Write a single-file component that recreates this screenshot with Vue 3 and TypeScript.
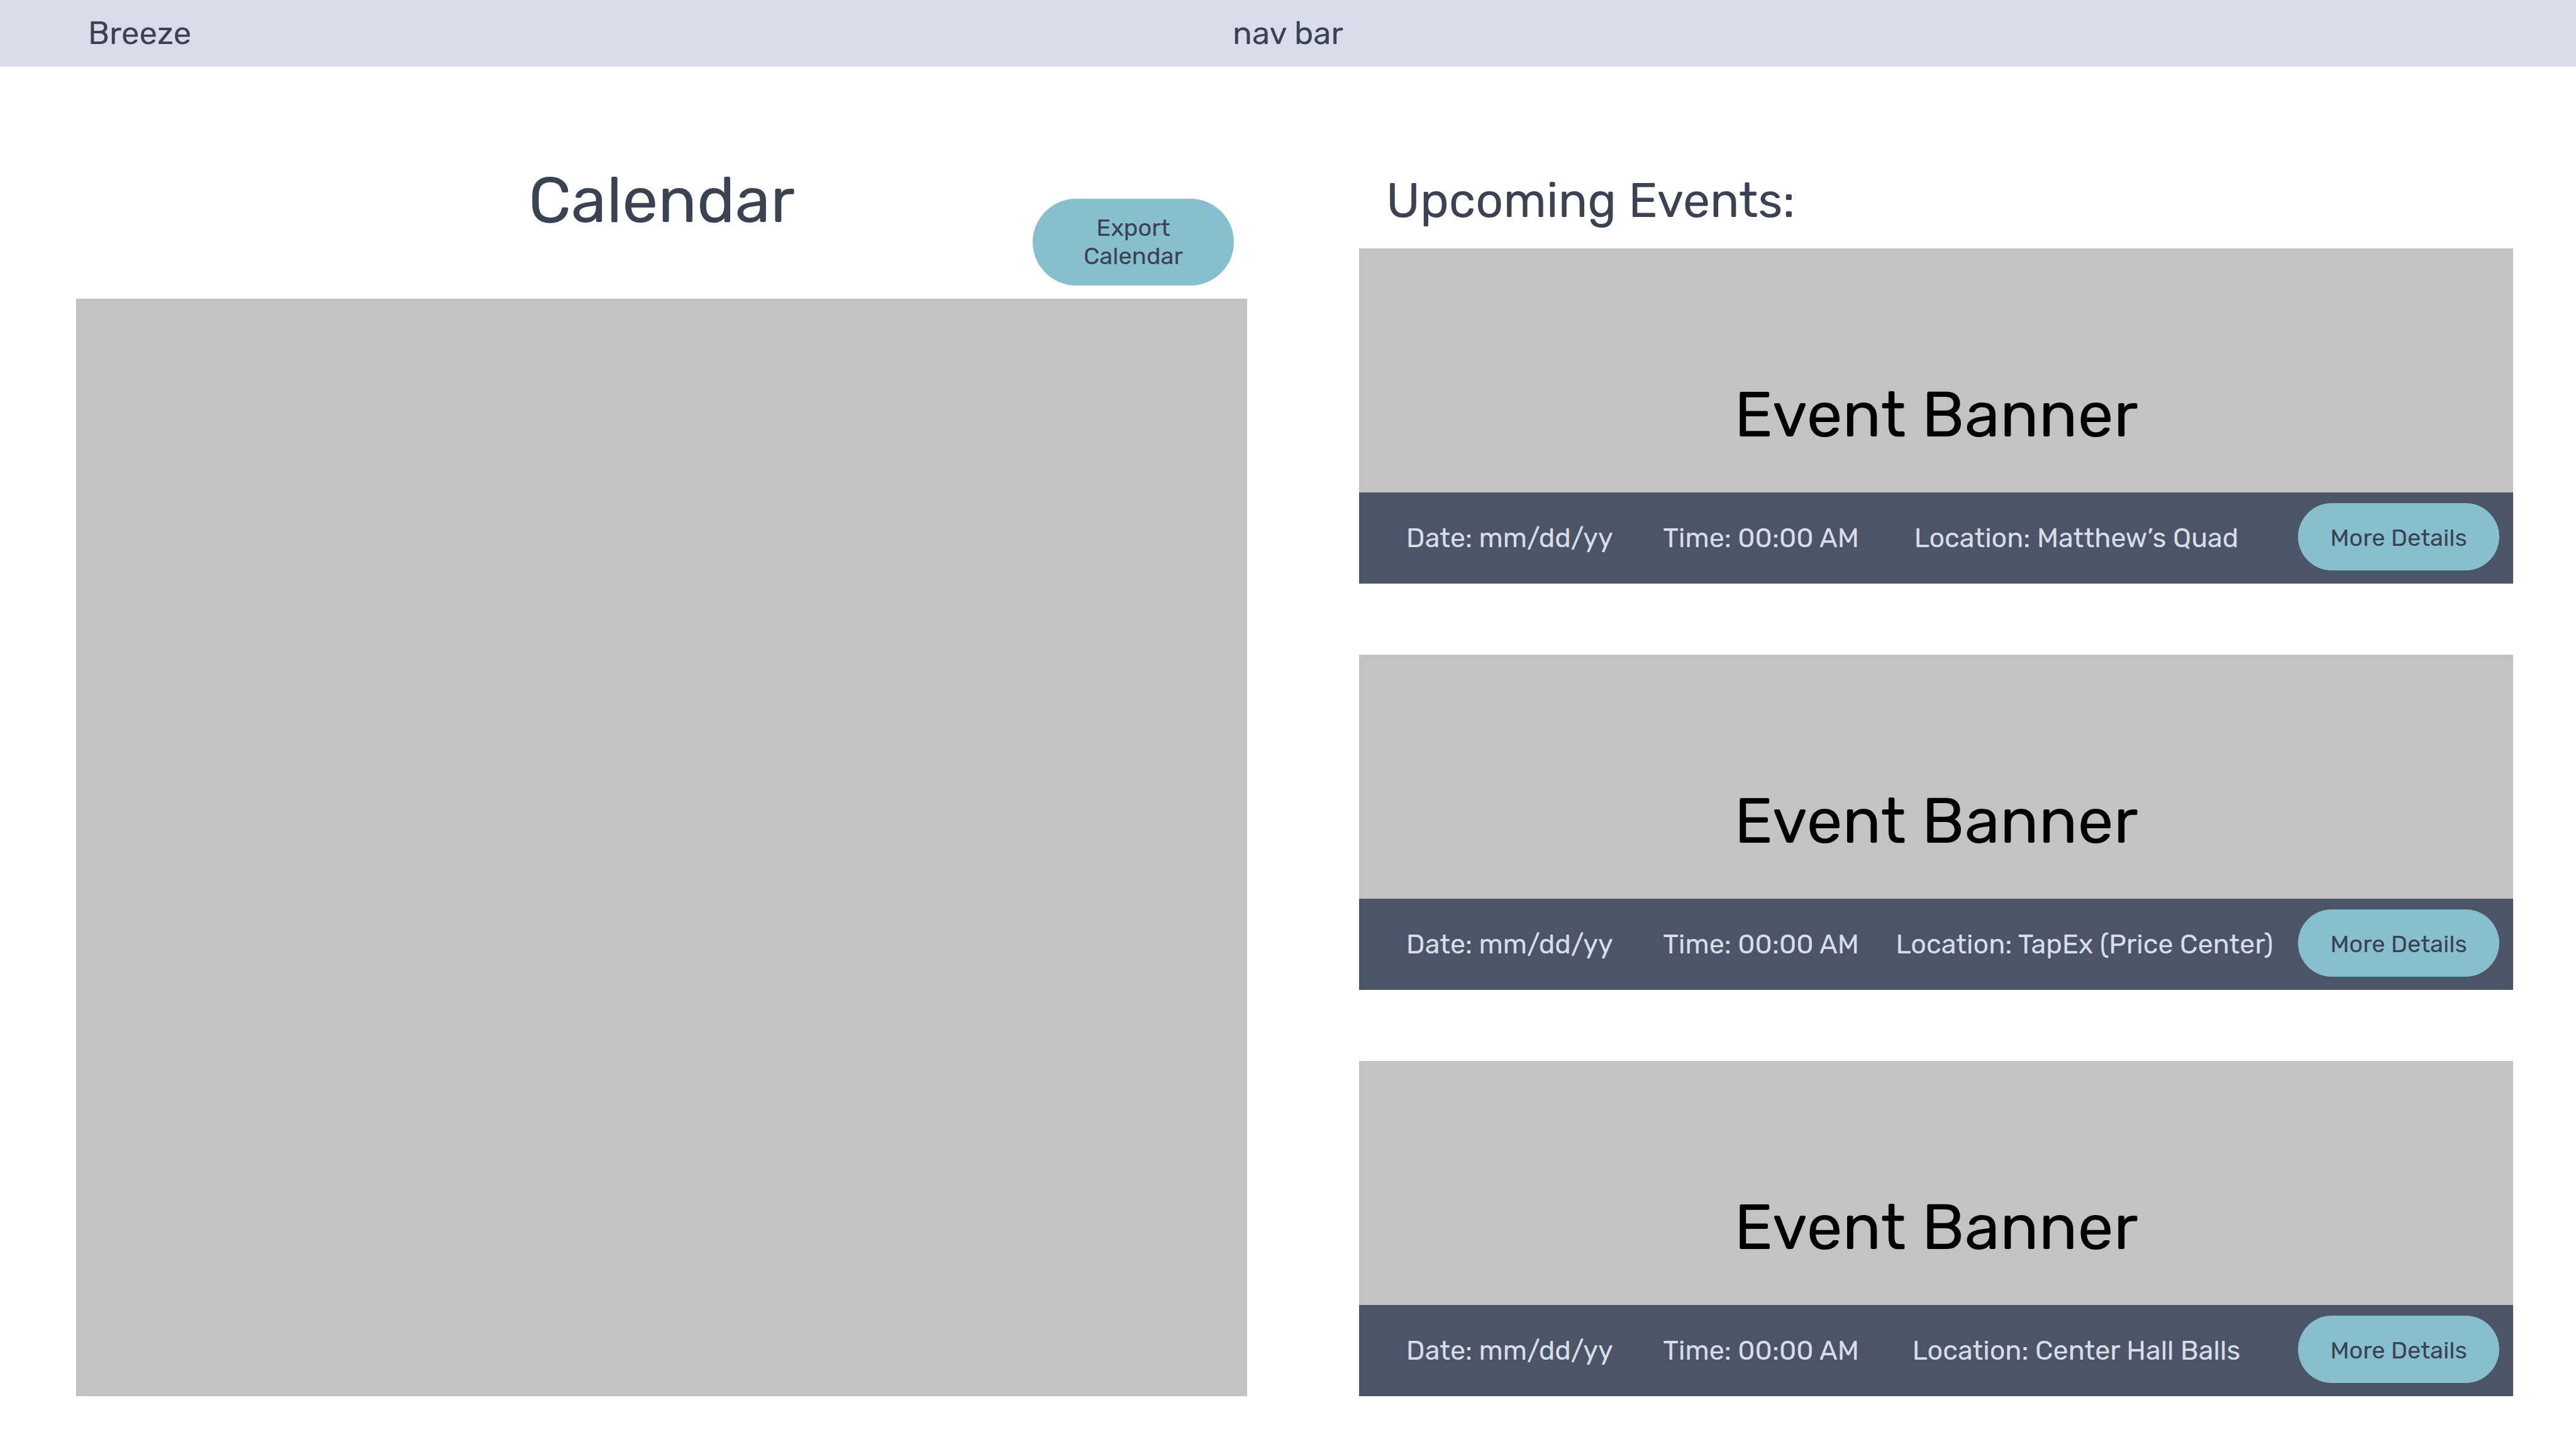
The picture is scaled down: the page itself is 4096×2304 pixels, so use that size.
<script setup lang="ts">
interface CampusEvent {
  id: number
  date: string
  time: string
  location: string
}

const events: CampusEvent[] = [
  { id: 1, date: 'mm/dd/yy', time: '00:00 AM', location: 'Matthew’s Quad' },
  { id: 2, date: 'mm/dd/yy', time: '00:00 AM', location: 'TapEx (Price Center)' },
  { id: 3, date: 'mm/dd/yy', time: '00:00 AM', location: 'Center Hall Balls' },
]
</script>

<template>
  <div class="page">
    <header class="nav">
      <a class="brand" href="#">Breeze</a>
      <nav class="nav-label">nav bar</nav>
    </header>

    <main class="content">
      <section class="column">
        <div class="calendar-head">
          <h1 class="calendar-title">Calendar</h1>
          <button class="pill export" type="button">Export<br />Calendar</button>
        </div>
        <div class="calendar"></div>
      </section>

      <section class="column">
        <div class="events-head">
          <h2 class="events-title">Upcoming Events:</h2>
        </div>
        <div class="events">
          <article v-for="event in events" :key="event.id" class="event">
            <div class="banner">Event Banner</div>
            <div class="details">
              <span>Date: {{ event.date }}</span>
              <span>Time: {{ event.time }}</span>
              <span class="location">Location: {{ event.location }}</span>
              <button class="pill more" type="button">More Details</button>
            </div>
          </article>
        </div>
      </section>
    </main>
  </div>
</template>

<style>
body {
  margin: 0;
  background: #fff;
}
</style>

<style scoped>
.page {
  box-sizing: border-box;
  min-height: 100vh;
  padding-bottom: 84px;
  color: #3b4252;
  font-family: Rubik, Inter, Roboto, sans-serif;
}

.nav {
  display: grid;
  grid-template-columns: 1fr auto 1fr;
  align-items: center;
  height: 106px;
  padding: 0 140px;
  background: #d8dde9;
  font-size: 51px;
  line-height: 60px;
}

.brand {
  color: inherit;
  text-decoration: none;
}

.content {
  display: grid;
  grid-template-columns: 1862fr 1835fr;
  column-gap: 178px;
  padding: 0 100px 0 121px;
}

.column {
  display: flex;
  flex-direction: column;
}

.calendar-head {
  display: grid;
  grid-template-columns: 1fr auto 1fr;
  height: 369px;
}

.calendar-title {
  grid-column: 2;
  margin: 153px 0 0;
  font-size: 102px;
  font-weight: 400;
  line-height: 120px;
}

.calendar {
  flex: 1;
  background: #c3c3c3;
}

.pill {
  width: 320px;
  padding: 0;
  border: 0;
  border-radius: 70px;
  background: #88bfce;
  color: inherit;
  font-family: inherit;
  font-size: 38px;
  line-height: 45px;
  cursor: pointer;
}

.export {
  align-self: end;
  justify-self: end;
  height: 138px;
  margin: 0 21px 21px 0;
}

.events-head {
  height: 289px;
}

.events-title {
  margin: 0;
  padding: 168px 0 0 43px;
  font-size: 77px;
  font-weight: 400;
  line-height: 90px;
}

.events {
  display: flex;
  flex-direction: column;
  gap: 113px;
}

.banner {
  display: flex;
  align-items: center;
  justify-content: center;
  box-sizing: border-box;
  height: 388px;
  padding-top: 142px;
  background: #c3c3c3;
  color: #000;
  font-size: 102px;
  line-height: 120px;
}

.details {
  display: grid;
  grid-template-columns: 408fr 370fr 639fr 320px;
  align-items: center;
  height: 145px;
  padding: 0 22px 0 75px;
  background: #4b5567;
  color: #d8dee9;
  font-size: 43px;
  line-height: 50px;
  white-space: nowrap;
}

.location {
  justify-self: start;
  min-width: 574px;
  text-align: center;
}

.more {
  align-self: start;
  height: 107px;
  margin-top: 17px;
  padding-top: 3px;
  color: #3b4252;
}
</style>
